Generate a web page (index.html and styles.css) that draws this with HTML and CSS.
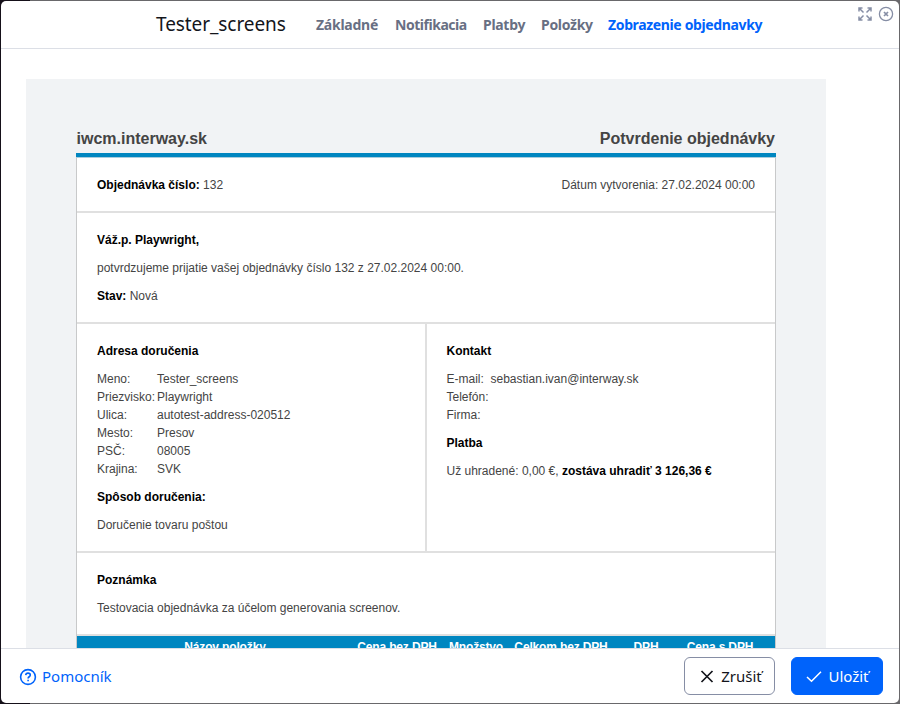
FILE: index.html
```
<!DOCTYPE html>
<html lang="sk">
<head>
<meta charset="utf-8">
<title>Tester_screens</title>
<link rel="stylesheet" href="styles.css">
</head>
<body>
<div class="modal">
  <header class="header">
    <h1 class="title">Tester_screens</h1>
    <nav class="tabs">
      <a class="t1">Základné</a><a class="t2">Notifikacia</a><a class="t3">Platby</a><a class="t4">Položky</a><a class="t5 active">Zobrazenie objednavky</a>
    </nav>
    <div class="tools">
      <svg width="14" height="14" viewBox="0 0 14 14" fill="none" stroke="currentColor" stroke-width="1.5"><path d="M1 4.5V1h3.500M1 1l4.500 4.500M9.500 1H13v3.500M13 1L8.500 5.500M1 9.500V13h3.500M1 13l4.500-4.500M13 9.500V13H9.500M13 13L8.500 8.500"/></svg>
      <svg width="16" height="16" viewBox="0 0 16 16" fill="none" stroke="currentColor" stroke-width="1.300"><circle cx="8" cy="8" r="6.600"/><path stroke-width="1.700" d="M6 6l4 4M10 6l-4 4"/></svg>
    </div>
  </header>
  <main class="body">
    <div class="mail">
      <div class="mailhead"><span>iwcm.interway.sk</span><span>Potvrdenie objednávky</span></div>
      <div class="sheet">
        <section class="row split"><p><b>Objednávka číslo:</b> 132</p><p>Dátum vytvorenia: 27.02.2024 00:00</p></section>
        <section class="row">
          <p><b>Váž.p. Playwright,</b></p>
          <p>potvrdzujeme prijatie vašej objednávky číslo 132 z 27.02.2024 00:00.</p>
          <p><b>Stav:</b> Nová</p>
        </section>
        <div class="cols">
          <section class="cell">
            <p><b>Adresa doručenia</b></p>
            <dl class="address">
              <dt>Meno:</dt><dd>Tester_screens</dd>
              <dt>Priezvisko:</dt><dd>Playwright</dd>
              <dt>Ulica:</dt><dd>autotest-address-020512</dd>
              <dt>Mesto:</dt><dd>Presov</dd>
              <dt>PSČ:</dt><dd>08005</dd>
              <dt>Krajina:</dt><dd>SVK</dd>
            </dl>
            <p><b>Spôsob doručenia:</b></p>
            <p>Doručenie tovaru poštou</p>
          </section>
          <section class="cell">
            <p><b>Kontakt</b></p>
            <dl class="contact">
              <dt>E-mail:</dt><dd>sebastian.ivan@interway.sk</dd>
              <dt>Telefón:</dt><dd></dd>
              <dt>Firma:</dt><dd></dd>
            </dl>
            <p><b>Platba</b></p>
            <p>Už uhradené: 0,00 €, <b>zostáva uhradiť 3 126,36 €</b></p>
          </section>
        </div>
        <section class="row">
          <p><b>Poznámka</b></p>
          <p>Testovacia objednávka za účelom generovania screenov.</p>
        </section>
        <div class="thead"><span></span><span>Názov položky</span><span>Cena bez DPH</span><span>Množstvo</span><span>Celkom bez DPH</span><span>DPH</span><span>Cena s DPH</span></div>
      </div>
    </div>
  </main>
  <footer class="footer">
    <a class="help"><svg width="18" height="18" viewBox="0 0 18 18" fill="none" stroke="currentColor" stroke-width="1.600"><circle cx="9" cy="9" r="7.400"/><path d="M6.700 7.100c.2-1.400 1.200-2 2.300-2 1.300 0 2.300.8 2.300 2 0 1.600-2.200 1.700-2.200 3.300M9.100 11.700v1.500"/></svg><span>Pomocník</span></a>
    <div class="buttons">
      <button class="btn cancel"><svg width="14" height="14" viewBox="0 0 14 14" fill="none" stroke="currentColor" stroke-width="1.700"><path d="M1.500 2l11 11M12.500 2l-11 11"/></svg><span>Zrušiť</span></button>
      <button class="btn save"><svg width="16" height="14" viewBox="0 0 16 14" fill="none" stroke="currentColor" stroke-width="1.500"><path d="M1 8l4.500 4.300L15 2.700"/></svg><span>Uložiť</span></button>
    </div>
  </footer>
</div>
</body>
</html>
```
FILE: styles.css
```
* { box-sizing: border-box; }
html, body { margin: 0; height: 100%; overflow: hidden; }
body { padding: 1px; background: linear-gradient(90deg, #151019 30px, #69686b 30px); font-family: "Noto Sans", sans-serif; }
.modal { height: 702px; background: #fff; border-radius: 5px; overflow: hidden; display: flex; flex-direction: column; }
.header { height: 48px; flex: none; display: flex; align-items: center; border-bottom: 1px solid #dcdfe6; padding-left: 155px; }
.title { margin: 0 0 2px; font-size: 19px; font-weight: 400; line-height: 28px; color: #13151b; width: 160px; white-space: nowrap; letter-spacing: -0.08px; }
.tabs { display: flex; font-size: 14px; font-weight: 700; color: #686f83; white-space: nowrap; flex: 1; letter-spacing: -0.36px; }
.tabs a { flex: none; }
.t1 { width: 79px; letter-spacing: -0.25px; }
.t2 { width: 88px; letter-spacing: -0.47px; }
.t3 { width: 58px; letter-spacing: -0.3px; }
.t4 { width: 67px; letter-spacing: -0.3px; }
.tabs .active { color: #0063fb; }
.tools { display: flex; gap: 6px; align-items: center; align-self: flex-start; color: #868ea5; padding: 5px 5px 0 0; }
.body { flex: 1; min-height: 0; overflow: hidden; padding: 30px 25px 0; }
.mail { width: 800px; min-height: 620px; padding: 46px 50px 0; background: #f1f3f5; font: 12px/18px "Liberation Sans", Arial, sans-serif; color: #444; }
.mailhead { height: 32px; padding: 2px 1px 0 0.500px; display: flex; justify-content: space-between; font-size: 16px; font-weight: 700; line-height: 24px; border-bottom: 4px solid #0086c0; }
.sheet { background: #fff; border: 1px solid #c8c9ca; border-top: 1px solid #aacddd; }
.row { padding: 18px 20px 17px; border-bottom: 2px solid #e0e0e0; }
p, dl, dd { margin: 0; }
p + p, dl, dl + p { margin-top: 10px; }
.split { display: flex; justify-content: space-between; }
.split p { margin: 0; }
b { color: #000; }
.cols { display: grid; grid-template-columns: 350px 1fr; border-bottom: 2px solid #e0e0e0; }
.cell { padding: 18px 20px 17px; }
.cell + .cell { padding-left: 19.500px; }
.cell:first-child { border-right: 2px solid #e0e0e0; }
dl { display: grid; grid-auto-rows: 18px; white-space: nowrap; }
.address { grid-template-columns: 60px 1fr; }
.contact { grid-template-columns: 44px 1fr; }
.thead { display: grid; grid-template-columns: 26px 244px 100px 58px 112px 58px 90px; background: #0086c0; color: #fff; font-weight: 700; letter-spacing: -0.15px; text-align: center; padding: 2px 0 20px; white-space: nowrap; }
.footer { height: 55px; flex: none; display: flex; justify-content: space-between; align-items: center; padding: 0 16px 0 18px; border-top: 1px solid #dcdfe6; font-size: 15px; }
.help { display: flex; gap: 5px; align-items: center; color: #0063fb; }
.help svg { position: relative; top: 1px; }
.buttons { display: flex; gap: 16px; }
.btn { height: 38px; display: flex; align-items: center; justify-content: center; border-radius: 6px; font: 15px "Noto Sans", sans-serif; padding: 0; white-space: nowrap; }
.cancel { width: 91px; gap: 7px; background: #fff; border: 1px solid #868ea5; color: #13151b; padding-left: 3px; }
.save { width: 92px; gap: 6px; background: #0063fb; border: 1px solid #0063fb; color: #fff; padding-left: 1px; }
```
